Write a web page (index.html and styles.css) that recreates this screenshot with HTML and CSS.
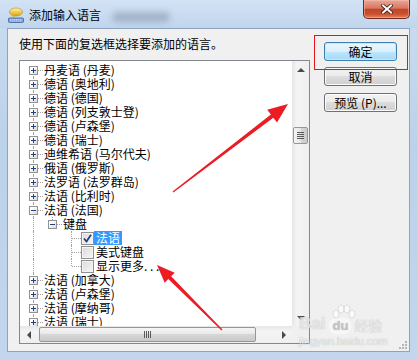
FILE: index.html
```html
<!DOCTYPE html>
<html lang="zh-CN">
<head>
    <meta charset="UTF-8">
    <title>添加输入语言</title>
    <link rel="stylesheet" href="styles.css">
</head>
<body>
    <div class="window">
        <div class="titlebar">
            <svg class="app-icon" viewBox="0 0 16 16" width="16" height="16">
                <defs>
                    <linearGradient id="bubble" x1="0" y1="0" x2="0" y2="1">
                        <stop offset="0" stop-color="#fff3b0"/>
                        <stop offset="1" stop-color="#e0a400"/>
                    </linearGradient>
                </defs>
                <ellipse cx="8" cy="5" rx="6.5" ry="4" fill="url(#bubble)" stroke="#b78a10" stroke-width="0.6"/>
                <path d="M5 8.5 L4 11 L7.5 8.8 Z" fill="#e6b21c"/>
                <rect x="0.5" y="11" width="15" height="4.5" rx="1" fill="#7ea6d8" stroke="#3e6396" stroke-width="0.8"/>
                <path d="M2 12.6 H14 M2 14 H14" stroke="#e8f1fb" stroke-width="0.7" stroke-dasharray="1.3 0.7"/>
            </svg>
            <span class="title">添加输入语言</span>
            <span class="glass-blur"></span>
            <span class="close-btn">
                <svg viewBox="0 0 12 10" width="12" height="10">
                    <path d="M2 1.5 L10 8.5 M10 1.5 L2 8.5" stroke="#3a1a14" stroke-width="3.6" stroke-linecap="square"/>
                    <path d="M2 1.5 L10 8.5 M10 1.5 L2 8.5" stroke="#fff" stroke-width="2" stroke-linecap="square"/>
                </svg>
            </span>
        </div>

        <div class="client">
            <div class="main">
                <p class="hint">使用下面的复选框选择要添加的语言。</p>
                <div class="listbox">
                    <div class="tree">
                        <div class="row"><span class="col vb h"><span class="box plus"></span></span><span class="label">丹麦语 (丹麦)</span></div>
                        <div class="row"><span class="col v h"><span class="box plus"></span></span><span class="label">德语 (奥地利)</span></div>
                        <div class="row"><span class="col v h"><span class="box plus"></span></span><span class="label">德语 (德国)</span></div>
                        <div class="row"><span class="col v h"><span class="box plus"></span></span><span class="label">德语 (列支敦士登)</span></div>
                        <div class="row"><span class="col v h"><span class="box plus"></span></span><span class="label">德语 (卢森堡)</span></div>
                        <div class="row"><span class="col v h"><span class="box plus"></span></span><span class="label">德语 (瑞士)</span></div>
                        <div class="row"><span class="col v h"><span class="box plus"></span></span><span class="label">迪维希语 (马尔代夫)</span></div>
                        <div class="row"><span class="col v h"><span class="box plus"></span></span><span class="label">俄语 (俄罗斯)</span></div>
                        <div class="row"><span class="col v h"><span class="box plus"></span></span><span class="label">法罗语 (法罗群岛)</span></div>
                        <div class="row"><span class="col v h"><span class="box plus"></span></span><span class="label">法语 (比利时)</span></div>
                        <div class="row"><span class="col v h"><span class="box"></span></span><span class="label">法语 (法国)</span></div>
                        <div class="row"><span class="col v"></span><span class="col vt h"><span class="box"></span></span><span class="label">键盘</span></div>
                        <div class="row"><span class="col v"></span><span class="col"></span><span class="col v h"></span><span class="check on"><svg viewBox="0 0 9 9" width="9" height="9"><path d="M1 4.5 L3.5 7.5 L8 0.8" fill="none" stroke="#2c3f7a" stroke-width="1.8"/></svg></span><span class="label sel">法语</span></div>
                        <div class="row"><span class="col v"></span><span class="col"></span><span class="col v h"></span><span class="check"></span><span class="label">美式键盘</span></div>
                        <div class="row"><span class="col v"></span><span class="col"></span><span class="col vt h"></span><span class="check"></span><span class="label">显示更多. . .</span></div>
                        <div class="row"><span class="col v h"><span class="box plus"></span></span><span class="label">法语 (加拿大)</span></div>
                        <div class="row"><span class="col v h"><span class="box plus"></span></span><span class="label">法语 (卢森堡)</span></div>
                        <div class="row"><span class="col v h"><span class="box plus"></span></span><span class="label">法语 (摩纳哥)</span></div>
                        <div class="row"><span class="col v h"><span class="box plus"></span></span><span class="label">法语 (瑞士)</span></div>
                    </div>
                    <div class="vscroll">
                        <span class="sb-btn"><span class="tri up"></span></span>
                        <span class="vtrack"><span class="vthumb"><span class="vgrip"></span></span></span>
                        <span class="sb-btn"><span class="tri down"></span></span>
                    </div>
                    <div class="hscroll">
                        <span class="sb-btn"><span class="tri left"></span></span>
                        <span class="htrack"><span class="hthumb"><span class="hgrip"></span></span></span>
                        <span class="sb-btn"><span class="tri right"></span></span>
                    </div>
                    <div class="corner"></div>
                </div>
            </div>

            <div class="buttons">
                <button class="btn default">确定</button>
                <button class="btn">取消</button>
                <button class="btn preview">预览 (P)...</button>
                <span class="mark"></span>
            </div>

            <svg class="grip" viewBox="0 0 8 8" width="8" height="8">
                <rect x="6" y="0" width="2" height="2"/>
                <rect x="3" y="3" width="2" height="2"/>
                <rect x="6" y="3" width="2" height="2"/>
                <rect x="0" y="6" width="2" height="2"/>
                <rect x="3" y="6" width="2" height="2"/>
                <rect x="6" y="6" width="2" height="2"/>
            </svg>
        </div>

        <!-- red annotation arrows -->
        <svg class="arrows" viewBox="0 0 417 359" width="417" height="359">
            <polygon points="173.4,192.6 273.3,117.8 277,122.6 288,104 267.2,109.8 270.9,114.6 172.6,191.4"/>
            <polygon points="222.5,329.5 171.1,276.3 174.7,272.7 157,265 164.7,282.7 168.3,279.1 221.5,330.5"/>
        </svg>

        <div class="watermark">
            <div class="wm-top">
                <span class="wm-bai">Bai</span>
                <span class="wm-du">du</span>
                <span class="wm-cn">经验</span>
                <svg class="wm-paw" viewBox="0 0 28 16" width="28" height="16">
                    <ellipse cx="6" cy="10" rx="3" ry="4"/>
                    <ellipse cx="11" cy="5" rx="3" ry="4"/>
                    <ellipse cx="17" cy="5" rx="3" ry="4"/>
                    <ellipse cx="22" cy="10" rx="3" ry="4"/>
                </svg>
            </div>
            <div class="wm-url">jingyan.baidu.com</div>
        </div>
    </div>
</body>
</html>
```

FILE: styles.css
```css
* {
    box-sizing: border-box;
}
body {
    margin: 0;
    width: 417px;
    height: 359px;
    overflow: hidden;
    font-family: "Noto Sans CJK SC", "Noto Sans", sans-serif;
    font-size: 12px;
    color: #000;
    background: #bfd4ec;
}
.window {
    position: relative;
    width: 417px;
    height: 359px;
    display: flex;
    flex-direction: column;
    background: linear-gradient(#cadcf1, #bcd2ea 40%, #c2d6ed 100%);
}

/* Title bar */
.titlebar {
    flex: none;
    height: 28px;
    display: flex;
    align-items: flex-start;
    padding-left: 8px;
    background: linear-gradient(#d3e3f5, #c0d5ec);
}
.app-icon {
    margin-top: 7px;
    flex: none;
}
.title {
    margin: 7px 0 0 5px;
    line-height: 16px;
    font-size: 12px;
}
.glass-blur {
    width: 58px;
    height: 10px;
    margin: 12px 0 0 11px;
    background: rgba(95, 105, 125, 0.35);
    border-radius: 5px;
    filter: blur(3px);
}
.close-btn {
    margin-left: auto;
    margin-right: 7px;
    width: 47px;
    height: 19px;
    display: flex;
    align-items: center;
    justify-content: center;
    border: 1px solid #6e2a1c;
    border-top: none;
    border-radius: 0 0 5px 5px;
    background: linear-gradient(#e9a898 0%, #d87862 45%, #c2462b 52%, #c9502f 78%, #e2865e 100%);
    box-shadow: inset 0 0 0 1px rgba(255, 200, 180, 0.45);
}

/* Client area */
.client {
    flex: 1;
    position: relative;
    margin: 0 7px 7px 7px;
    padding: 7px 0 0 11px;
    display: flex;
    background: #f0f0f0;
    border: 1px solid #8ea3bd;
}
.hint {
    margin: 0 0 8px 0;
    line-height: 16px;
}
.listbox {
    width: 291px;
    height: 284px;
    border: 1px solid #828790;
    background: #fff;
    display: grid;
    grid-template-columns: 1fr 17px;
    grid-template-rows: 1fr 17px;
}

/* Tree */
.tree {
    overflow: hidden;
    padding: 2px 0 0 4px;
}
.row {
    display: flex;
    height: 14px;
    line-height: 14px;
    white-space: nowrap;
}
.col {
    position: relative;
    flex: none;
    width: 19px;
    height: 14px;
}
.col.v::before,
.col.vt::before,
.col.vb::before {
    content: "";
    position: absolute;
    left: 9px;
    top: 0;
    bottom: 0;
    border-left: 1px dotted #a0a0a0;
}
.col.vt::before {
    bottom: 7px;
}
.col.vb::before {
    top: 7px;
}
.col.h::after {
    content: "";
    position: absolute;
    left: 10px;
    right: 0;
    top: 7px;
    border-top: 1px dotted #a0a0a0;
}
.box {
    position: absolute;
    z-index: 1;
    left: 5px;
    top: 3px;
    width: 9px;
    height: 9px;
    border: 1px solid #929292;
    background: linear-gradient(135deg, #ffffff 30%, #d8d8d8);
}
.box::before {
    content: "";
    position: absolute;
    left: 1px;
    top: 3px;
    width: 5px;
    height: 1px;
    background: #24407c;
}
.box.plus::after {
    content: "";
    position: absolute;
    left: 3px;
    top: 1px;
    width: 1px;
    height: 5px;
    background: #24407c;
}
.check {
    flex: none;
    width: 13px;
    height: 13px;
    margin-top: 1px;
    border: 1px solid #8f8f8f;
    background: linear-gradient(135deg, #d9d9d9, #f7f7f7);
    box-shadow: inset 0 0 0 1px #f4f4f4;
    display: flex;
    align-items: center;
    justify-content: center;
}
.label {
    padding: 0 2px;
    margin-left: -1px;
}
.check + .label {
    margin-left: 0;
}
.label.sel {
    background: #3399ff;
    color: #fff;
}

/* Scroll bars */
.vscroll,
.hscroll {
    display: flex;
    background: linear-gradient(to right, #e6e6e6, #f4f4f4 30%, #efefef);
}
.vscroll {
    flex-direction: column;
}
.hscroll {
    background: linear-gradient(#e6e6e6, #f4f4f4 30%, #efefef);
}
.sb-btn {
    flex: none;
    width: 17px;
    height: 17px;
    display: flex;
    align-items: center;
    justify-content: center;
}
.tri {
    width: 0;
    height: 0;
    border: 4px solid transparent;
}
.tri.up {
    border-bottom-color: #4a4a4a;
    border-top-width: 0;
}
.tri.down {
    border-top-color: #4a4a4a;
    border-bottom-width: 0;
}
.tri.left {
    border-right-color: #4a4a4a;
    border-left-width: 0;
}
.tri.right {
    border-left-color: #4a4a4a;
    border-right-width: 0;
}
.vtrack,
.htrack {
    flex: 1;
    display: flex;
}
.vtrack {
    flex-direction: column;
    padding-top: 49px;
}
.htrack {
    padding-left: 2px;
}
.vthumb {
    width: 15px;
    height: 17px;
    margin-left: 1px;
    border: 1px solid #969696;
    border-radius: 2px;
    background: linear-gradient(to right, #f5f5f5, #e6e6e6 50%, #d5d5d5 52%, #cbcbcb);
    display: flex;
    align-items: center;
    justify-content: center;
}
.vgrip {
    width: 7px;
    height: 7px;
    background: repeating-linear-gradient(#5a5a5a 0 1px, transparent 1px 2px);
}
.hthumb {
    width: 217px;
    height: 15px;
    margin-top: 1px;
    border: 1px solid #969696;
    border-radius: 2px;
    background: linear-gradient(#f5f5f5, #e9e9e9 45%, #d7d7d7 50%, #c9c9c9);
    display: flex;
    align-items: center;
    justify-content: center;
}
.hgrip {
    width: 7px;
    height: 7px;
    background: repeating-linear-gradient(to right, #5a5a5a 0 1px, transparent 1px 2px);
}
.corner {
    background: #f0f0f0;
}

/* Buttons */
.buttons {
    position: relative;
    margin-left: 14px;
    padding-top: 6px;
    width: 73px;
    display: flex;
    flex-direction: column;
}
.btn {
    width: 73px;
    height: 19px;
    padding: 0;
    border: 1px solid #707070;
    border-radius: 3px;
    background: linear-gradient(#f2f2f2 0%, #ebebeb 50%, #dddddd 50%, #cfcfcf 100%);
    box-shadow: inset 0 0 0 1px #fcfcfc;
    font-family: "Noto Sans CJK SC", "Noto Sans", sans-serif;
    font-size: 12px;
    line-height: 17px;
    color: #000;
}
.btn + .btn {
    margin-top: 6px;
}
.btn.preview {
    margin-top: 7px;
}
.btn.default {
    border-color: #3c7fb1;
    background: linear-gradient(#eaf6fd 0%, #d9f0fc 50%, #bee6fd 50%, #a7d9f5 100%);
    box-shadow: inset 0 0 0 1px #c6e8fb;
}
.mark {
    position: absolute;
    left: -10px;
    top: -1px;
    width: 94px;
    height: 35px;
    border: 1px solid #e3141c;
}
.grip {
    position: absolute;
    right: 2px;
    bottom: 2px;
    fill: #b5b5b5;
}

/* Annotation overlay */
.arrows {
    position: absolute;
    left: 0;
    top: 0;
    fill: #ec1c24;
    pointer-events: none;
}
.watermark {
    position: absolute;
    left: 299px;
    top: 306px;
    color: rgba(255, 255, 255, 0.7);
    text-shadow: 0 0 1px rgba(110, 110, 110, 0.55);
    pointer-events: none;
}
.wm-top {
    position: relative;
    display: flex;
    align-items: flex-end;
    height: 28px;
}
.wm-bai {
    font-family: "Liberation Sans", sans-serif;
    font-weight: bold;
    font-size: 17px;
    line-height: 20px;
}
.wm-du {
    margin-left: 4px;
    padding: 0 3px;
    font-family: "Liberation Sans", sans-serif;
    font-weight: bold;
    font-size: 13px;
    line-height: 16px;
    border-radius: 7px;
    background: rgba(255, 255, 255, 0.45);
    color: rgba(200, 200, 200, 0.8);
}
.wm-cn {
    margin-left: 3px;
    font-size: 14px;
    line-height: 18px;
}
.wm-paw {
    position: absolute;
    left: 31px;
    top: -2px;
    fill: rgba(255, 255, 255, 0.6);
    stroke: rgba(140, 140, 140, 0.4);
    stroke-width: 0.6;
}
.wm-url {
    margin-top: 1px;
    font-family: "Liberation Sans", sans-serif;
    font-size: 11px;
    line-height: 12px;
}
```
